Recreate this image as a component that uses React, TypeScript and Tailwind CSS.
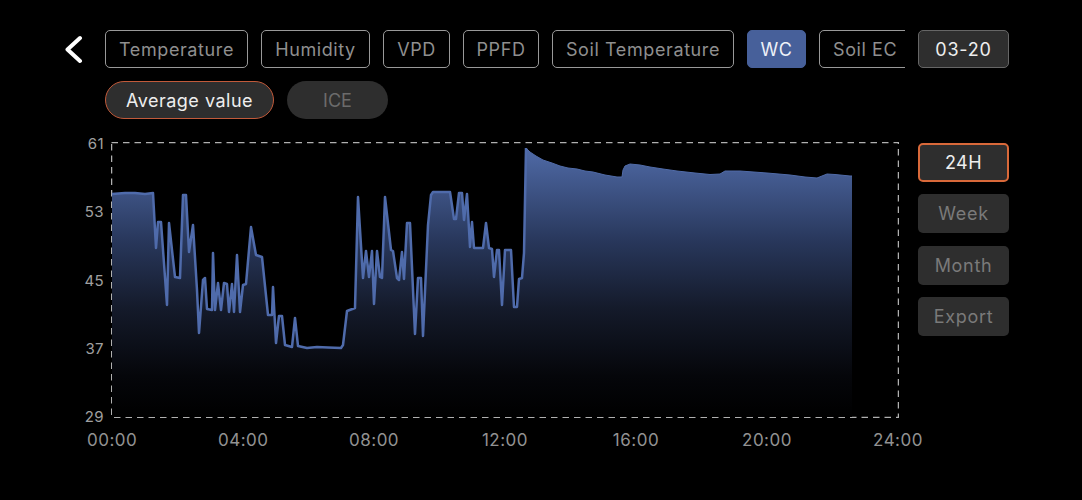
import React from "react";

const tabs = [
  { label: "Temperature", width: "w-[143px]" },
  { label: "Humidity", width: "w-[109px]" },
  { label: "VPD", width: "w-[67px]" },
  { label: "PPFD", width: "w-[76px]" },
  { label: "Soil Temperature", width: "w-[182px]" },
  { label: "WC", width: "w-[59px]", active: true },
];

const yLabels = ["61", "53", "45", "37", "29"];
const xLabels = ["00:00", "04:00", "08:00", "12:00", "16:00", "20:00", "24:00"];
const ranges = ["Week", "Month", "Export"];

// traced from the curve, in page pixels
const spiky =
  "112,194 125,193 135,193 145,194 153,193 156,248 158,222 161,222 167,305 169,223 175,277 180,278 183,195 186,195 189,252 193,225 197,290 199,333 203,280 205,278 207,309 212,310 213,253 215,310 218,283 221,310 224,283 227,284 229,312 232,284 234,312 237,255 240,312 243,285 246,284 251,227 256,255 262,257 268,315 272,315 273,287 276,343 279,316 282,316 285,345 292,347 295,318 298,346 307,348 317,347 328,347.5 341,348 343,345 347,311 355,308 358,197 363,278 366,251 369,277 372,251 374,304 377,251 380,277 382,278 385,197 391,250 393,251 397,278 399,280 402,252 404,279 407,223 410,223 415,334 418,278 421,278 423,336 428,225 431,195 433,192 450,192 454,219 456,219 459,193 462,193 464,220 467,194 470,247 472,222 474,248 483,248 486,223 489,248 492,249 494,277 497,250 499,250 502,305 505,250 511,250 514,307 517,307 519,279 522,278 524,253 526,148";
const smooth =
  "526,148 530,152 536,156 543,160 552,163 560,166 568,168 577,169 585,171 593,172 605,175 617,177 622,177 623,170 625,166 630,164 640,165 650,167 663,169 677,171 695,173 710,174.5 720,174 725,171 740,171 767,173 790,175 805,177 817,178 822,176 827,174 835,174.5 850,176 852,176";

function Chart() {
  return (
    <svg className="block shrink-0 w-[788px] h-[276px] mt-[7px]" viewBox="111 142 788 276">
      <defs>
        <linearGradient id="fill" gradientUnits="userSpaceOnUse" x1="0" y1="147" x2="0" y2="417">
          <stop offset="0" stopColor="#506ba8" />
          <stop offset="0.35" stopColor="#28375b" />
          <stop offset="0.6" stopColor="#141a2a" />
          <stop offset="0.85" stopColor="#05060a" />
          <stop offset="1" stopColor="#000000" />
        </linearGradient>
      </defs>
      <rect x="111.5" y="142.5" width="787" height="275" fill="none" stroke="#b0b0b0" strokeWidth="1.5" strokeDasharray="6.5 5" />
      <polygon points={`112,417 ${spiky} ${smooth} 852,417`} fill="url(#fill)" />
      <polyline points={spiky} fill="none" stroke="#4f6bab" strokeWidth="2.5" strokeLinejoin="round" />
      <polyline points={smooth} fill="none" stroke="#506ba8" strokeWidth="1" />
    </svg>
  );
}

export default function App() {
  return (
    <div
      className="w-[1082px] h-[500px] bg-black overflow-hidden pl-[65px] pt-[30px]"
      style={{ fontFamily: "Inter, 'Noto Sans', sans-serif" }}
    >
      <div className="flex items-center">
        <svg className="block shrink-0 w-[40px] h-[38px]" viewBox="65 30 40 38">
          <polyline points="80,38 67.5,49.5 80,61" fill="none" stroke="#ffffff" strokeWidth="4" strokeLinecap="round" strokeLinejoin="round" />
        </svg>
        <div className="flex gap-[13px] w-[800px] overflow-hidden">
          {tabs.map((t) => (
            <div
              key={t.label}
              className={`${t.width} shrink-0 h-[38px] flex items-center justify-center rounded-[5px] border text-[18px] tracking-[0.6px] ${
                t.active ? "bg-[#47609a] border-[#47609a] text-[#eef1f8]" : "border-[#999999] text-[#8f8f8f]"
              }`}
            >
              {t.label}
            </div>
          ))}
          <div className="w-[110px] shrink-0 h-[38px] flex items-center pl-[13px] rounded-[5px] border border-[#999999] text-[18px] tracking-[0.6px] text-[#8f8f8f]">
            Soil EC
          </div>
        </div>
        <div className="ml-[13px] w-[91px] h-[38px] flex items-center justify-center rounded-[5px] border border-[#666666] bg-[#2e2e2e] text-[18px] tracking-[0.8px] text-[#eeeeee]">
          03-20
        </div>
      </div>

      <div className="flex gap-[13px] mt-[13px] ml-[40px]">
        <div className="w-[169px] h-[38px] flex items-center justify-center rounded-full border border-[#c25a3a] bg-[#2e2e2e] text-[18px] tracking-[0.5px] text-[#eeeeee]">
          Average value
        </div>
        <div className="w-[101px] h-[38px] flex items-center justify-center rounded-full bg-[#2e2e2e] text-[18px] text-[#6b6b6b]">
          ICE
        </div>
      </div>

      <div className="flex mt-[16px]">
        <div className="w-[39px] h-[291px] mr-[7px] flex flex-col justify-between items-end text-[15px] tracking-[0.4px] leading-[18px] text-[#a0a0a0]">
          {yLabels.map((l) => (
            <div key={l}>{l}</div>
          ))}
        </div>
        <Chart />
        <div className="ml-[19px] mt-[8px] flex flex-col gap-[12.3px]">
          <div className="w-[91px] h-[39px] flex items-center justify-center rounded-[5px] border-2 border-[#d9693a] bg-[#2e2e2e] text-[18px] tracking-[0.5px] text-[#eeeeee]">
            24H
          </div>
          {ranges.map((r) => (
            <div
              key={r}
              className="w-[91px] h-[39px] flex items-center justify-center rounded-[5px] bg-[#2e2e2e] text-[18px] tracking-[0.7px] text-[#7a7a7a]"
            >
              {r}
            </div>
          ))}
        </div>
      </div>

      <div className="flex justify-between w-[836px] ml-[22px] mt-[3px] text-[17px] tracking-[0.5px] leading-[22px] text-[#929292]">
        {xLabels.map((l) => (
          <div key={l} className="w-[50px] text-center">
            {l}
          </div>
        ))}
      </div>
    </div>
  );
}
